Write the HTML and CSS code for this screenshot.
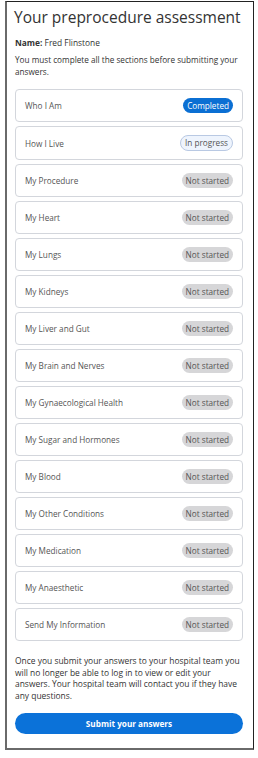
FILE: index.html
```html
<!DOCTYPE html>
<html lang="en">
<head>
<meta charset="utf-8">
<title>Your preprocedure assessment</title>
<link rel="stylesheet" href="styles.css">
</head>
<body>
<main class="frame">
  <h1 class="title">Your preprocedure assessment</h1>
  <p class="name"><strong>Name:</strong> Fred Flinstone</p>
  <p class="intro">You must complete all the sections before submitting your answers.</p>
  <ul class="sections">
    <li class="card"><span class="label">Who I Am</span><span class="badge done">Completed</span></li>
    <li class="card"><span class="label">How I Live</span><span class="badge progress">In progress</span></li>
    <li class="card"><span class="label">My Procedure</span><span class="badge todo">Not started</span></li>
    <li class="card"><span class="label">My Heart</span><span class="badge todo">Not started</span></li>
    <li class="card"><span class="label">My Lungs</span><span class="badge todo">Not started</span></li>
    <li class="card"><span class="label">My Kidneys</span><span class="badge todo">Not started</span></li>
    <li class="card"><span class="label">My Liver and Gut</span><span class="badge todo">Not started</span></li>
    <li class="card"><span class="label">My Brain and Nerves</span><span class="badge todo">Not started</span></li>
    <li class="card"><span class="label">My Gynaecological Health</span><span class="badge todo">Not started</span></li>
    <li class="card"><span class="label">My Sugar and Hormones</span><span class="badge todo">Not started</span></li>
    <li class="card"><span class="label">My Blood</span><span class="badge todo">Not started</span></li>
    <li class="card"><span class="label">My Other Conditions</span><span class="badge todo">Not started</span></li>
    <li class="card"><span class="label">My Medication</span><span class="badge todo">Not started</span></li>
    <li class="card"><span class="label">My Anaesthetic</span><span class="badge todo">Not started</span></li>
    <li class="card"><span class="label">Send My Information</span><span class="badge todo">Not started</span></li>
  </ul>
  <p class="outro">Once you submit your answers to your hospital team you will no longer be able to log in to view or edit your answers. Your hospital team will contact you if they have any questions.</p>
  <button class="submit" type="button">Submit your answers</button>
</main>
</body>
</html>
```
FILE: styles.css
```css
html, body {
  margin: 0;
  padding: 0;
  background: #fff;
}
body {
  font-family: "Open Sans", "Noto Sans", "Liberation Sans", sans-serif;
  color: #333;
}
.frame {
  box-sizing: border-box;
  margin: 1px 0 0 5px;
  width: 249px;
  height: 749px;
  border-top: 1px solid #222;
  border-right: 1px solid #222;
  border-left: 2px solid #6a6a6a;
  border-bottom: 2px solid #6a6a6a;
  padding: 4px 10px 0 8px;
  display: flex;
  flex-direction: column;
}
.title {
  margin: 0 0 0 -1px;
  font-size: 15.5px;
  line-height: 22px;
  font-weight: 500;
  color: #333;
  white-space: nowrap;
}
.name {
  margin: 9px 0 0;
  font-size: 8.4px;
  line-height: 11px;
}
.name strong { font-weight: 700; }
.intro {
  margin: 6px 0 0;
  font-size: 8.2px;
  line-height: 12px;
}
.sections {
  list-style: none;
  margin: 11px 0 0;
  padding: 0;
  display: flex;
  flex-direction: column;
  gap: 4px;
}
.card {
  display: flex;
  align-items: center;
  justify-content: space-between;
  border: 1px solid #d3d6dc;
  border-radius: 4px;
  padding: 8px 9px 8px 9px;
}
.label {
  font-size: 8.2px;
  color: #555;
}
.badge {
  font-size: 8.2px;
  line-height: 15px;
  height: 15px;
  padding: 0 4px;
  border-radius: 8px;
  white-space: nowrap;
}
.badge.done {
  background: #0b6fd3;
  color: #fff;
}
.badge.progress {
  line-height: 14px;
  height: 14px;
  background: #eef4fd;
  border: 1px solid #b9c9e3;
  color: #555;
}
.badge.todo {
  background: #d6d6d8;
  color: #555;
}
.outro {
  margin: 14px 0 0;
  font-size: 8.45px;
  line-height: 11.7px;
  color: #333;
}
.submit {
  margin-top: 11px;
  height: 21px;
  border: 0;
  border-radius: 11px;
  background: #0b72d9;
  color: #fff;
  font-family: inherit;
  font-size: 8.2px;
  font-weight: 700;
  cursor: pointer;
}
```
